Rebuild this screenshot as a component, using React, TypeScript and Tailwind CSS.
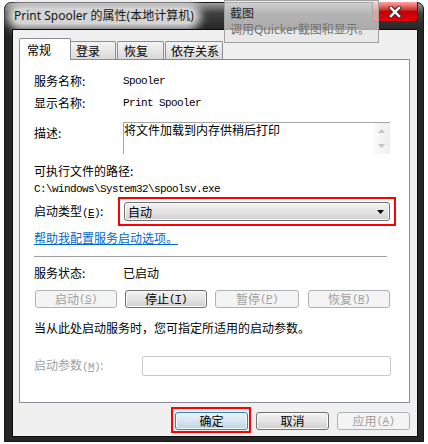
import React from "react";

const cjk = "font-['Noto_Sans_CJK_SC',sans-serif]";
const mono = "font-['Liberation_Mono','Noto_Sans_CJK_SC',monospace] text-[11px] tracking-[-0.6px]";
const btn =
  "flex items-center justify-center rounded-[3px] border border-[#707070] bg-linear-to-b from-[#f2f2f2] via-[#e4e4e4] to-[#cfcfcf] shadow-[inset_0_0_0_1px_#fbfbfb] text-black";
const btnOff =
  "flex items-center justify-center rounded-[3px] border border-[#adb2b5] bg-[#f4f4f4] text-[#a0a0a0]";

function Acc({ k }: { k: string }) {
  return (
    <span className={mono}>
      (<u>{k}</u>)
    </span>
  );
}

function Row({ label, children }: any) {
  return (
    <div className="flex h-[16px] items-center leading-[16px]">
      <div className="w-[89px] shrink-0">{label}</div>
      {children}
    </div>
  );
}

export default function App() {
  return (
    <div className={`relative h-[444px] w-[428px] overflow-hidden bg-white text-[12px] text-black ${cjk}`}>
      {/* window */}
      <div className="ml-[4px] mt-[2px] flex h-[440px] w-[420px] flex-col rounded-t-[7px] border border-neutral-900 bg-neutral-800">
        {/* title bar */}
        <div className="flex h-[26px] items-center rounded-t-[6px] bg-neutral-700 bg-linear-to-b from-neutral-400 via-neutral-700 via-40% to-neutral-800 pl-[8px]">
          <span className="rounded-[8px] bg-neutral-300 px-[1px] leading-[16px] text-neutral-900 shadow-[0_0_8px_6px_#d4d4d4] font-['Noto_Sans','Noto_Sans_CJK_SC',sans-serif]">
            Print Spooler 的属性(本地计算机)
          </span>
          <div className="mb-auto ml-auto mr-[5px] -mt-[1px] flex h-[20px] w-[46px] items-center justify-center rounded-b-[4px] border border-t-0 border-red-950 bg-red-600 bg-linear-to-b from-red-300 via-red-700 to-red-600">
            <svg width="14" height="12" viewBox="0 0 14 12">
              <path d="M3 2 L11 10 M11 2 L3 10" stroke="#3b2a28" strokeWidth="4.4" strokeLinecap="square" />
              <path d="M3 2 L11 10 M11 2 L3 10" stroke="#ffffff" strokeWidth="2.4" strokeLinecap="square" />
            </svg>
          </div>
        </div>

        {/* client */}
        <div className="ml-[7px] flex h-[408px] w-[406px] flex-col border border-neutral-950 bg-[#f0f0f0]">
          {/* tabs */}
          <div className="flex h-[29px] items-end pl-[6px]">
            <div className="relative z-10 -mb-[1px] flex h-[22px] w-[52px] items-center rounded-t-[2px] border border-b-0 border-[#898c95] bg-white pl-[7px]">
              常规
            </div>
            <div className="-ml-[1px] flex h-[18px] w-[46px] items-center rounded-t-[2px] border border-b-0 border-[#898c95] bg-linear-to-b from-[#f4f4f4] to-[#d9d9d9] pl-[5px]">
              登录
            </div>
            <div className="ml-[1px] flex h-[18px] w-[47px] items-center rounded-t-[2px] border border-b-0 border-[#898c95] bg-linear-to-b from-[#f4f4f4] to-[#d9d9d9] pl-[6px]">
              恢复
            </div>
            <div className="ml-[1px] flex h-[18px] w-[58px] items-center rounded-t-[2px] border border-b-0 border-[#898c95] bg-linear-to-b from-[#f4f4f4] to-[#d9d9d9] pl-[5px]">
              依存关系
            </div>
          </div>

          {/* panel */}
          <div className="ml-[6px] flex h-[344px] w-[391px] flex-col border border-[#898c95] bg-white pl-[14px] pt-[13px]">
            <Row label="服务名称:">
              <span className={mono}>Spooler</span>
            </Row>
            <div className="mt-[6px]">
              <Row label="显示名称:">
                <span className={mono}>Print Spooler</span>
              </Row>
            </div>

            {/* description */}
            <div className="mt-[11px] flex h-[32px]">
              <div className="mt-[3px] h-[16px] w-[89px] shrink-0 leading-[16px]">描述:</div>
              <div className="flex h-[32px] w-[267px] border-l border-t border-[#a5a5a5]">
                <div className="flex-1 leading-[14px]">将文件加载到内存供稍后打印</div>
                <div className="flex w-[17px] flex-col items-center justify-between bg-linear-to-r from-[#fafafa] to-[#eeeeee] pb-[6px] pt-[6px]">
                  <svg width="7" height="4" viewBox="0 0 7 4">
                    <path d="M0 4 L3.5 0 L7 4 Z" fill="#c4c4c4" />
                  </svg>
                  <svg width="7" height="4" viewBox="0 0 7 4">
                    <path d="M0 0 L3.5 4 L7 0 Z" fill="#c4c4c4" />
                  </svg>
                </div>
              </div>
            </div>

            <div className="mt-[9px] h-[16px] leading-[16px]">可执行文件的路径:</div>
            <div className="h-[16px] leading-[16px]">
              <span className={mono}>C:\windows\System32\spoolsv.exe</span>
            </div>

            {/* startup type */}
            <div className="mt-[2px] flex h-[29px] items-center">
              <div className="w-[84px] shrink-0">
                启动类型<Acc k="E" />:
              </div>
              <div className="h-[29px] w-[278px] border-2 border-[#ff0000] pl-[4px] pt-[3px]">
                <div className="flex h-[19px] w-[266px] items-center rounded-[3px] border border-[#707070] bg-linear-to-b from-[#f2f2f2] via-[#e4e4e4] to-[#cfcfcf] pl-[3px] pr-[5px] shadow-[inset_0_0_0_1px_#fbfbfb]">
                  <span className="flex-1 leading-[16px]">自动</span>
                  <svg width="7" height="4" viewBox="0 0 7 4">
                    <path d="M0 0 L7 0 L3.5 4 Z" fill="#000" />
                  </svg>
                </div>
              </div>
            </div>

            <div className="mt-[4px] h-[16px] leading-[16px] text-[#0066cc] underline">
              帮助我配置服务启动选项。
            </div>

            <div className="mt-[10px] w-[353px] border-t border-b border-t-[#a0a0a0] border-b-white" />

            <div className="mt-[7px]">
              <Row label="服务状态:">已启动</Row>
            </div>

            {/* service buttons */}
            <div className="mt-[9px] flex h-[18px]">
              <div className={`ml-[1px] w-[82px] ${btnOff}`}>
                启动<Acc k="S" />
              </div>
              <div className={`ml-[8px] w-[82px] ${btn}`}>
                停止<Acc k="T" />
              </div>
              <div className={`ml-[8px] w-[84px] ${btnOff}`}>
                暂停<Acc k="P" />
              </div>
              <div className={`ml-[9px] w-[82px] ${btnOff}`}>
                恢复<Acc k="R" />
              </div>
            </div>

            <div className="mt-[12px] h-[16px] leading-[16px]">
              当从此处启动服务时，您可指定所适用的启动参数。
            </div>

            <div className="mt-[20px] flex h-[20px] items-center">
              <div className="w-[108px] shrink-0 text-[#a0a0a0]">
                启动参数<Acc k="M" />:
              </div>
              <div className="h-[20px] w-[249px] rounded-[2px] border border-[#c9c9c9] bg-white" />
            </div>
          </div>

          {/* dialog buttons */}
          <div className="mt-[4px] flex justify-end pr-[7px]">
            <div className="h-[26px] w-[80px] border-2 border-[#ff0000] pl-[2px] pt-[3px]">
              <div className="flex h-[18px] w-[73px] items-center justify-center rounded-[3px] border border-[#3c7fb1] bg-linear-to-b from-[#eaf3fa] via-[#d6e6f2] to-[#bcd1e1] shadow-[inset_0_0_0_1px_#f4f9fd]">
                确定
              </div>
            </div>
            <div className={`ml-[5px] mt-[5px] h-[18px] w-[73px] ${btn}`}>取消</div>
            <div className={`ml-[8px] mt-[5px] h-[18px] w-[73px] ${btnOff}`}>
              应用<Acc k="A" />
            </div>
          </div>
        </div>
      </div>

      {/* Quicker tooltip overlay */}
      <div className="absolute left-[224px] top-0 h-[43px] w-[155px] border border-neutral-400 bg-neutral-200/70 pl-[5px] pt-[3px] leading-[17px]">
        <div className="text-neutral-800">截图</div>
        <div className="text-neutral-500 font-['Noto_Sans','Noto_Sans_CJK_SC',sans-serif]">调用Quicker截图和显示。</div>
      </div>
    </div>
  );
}
